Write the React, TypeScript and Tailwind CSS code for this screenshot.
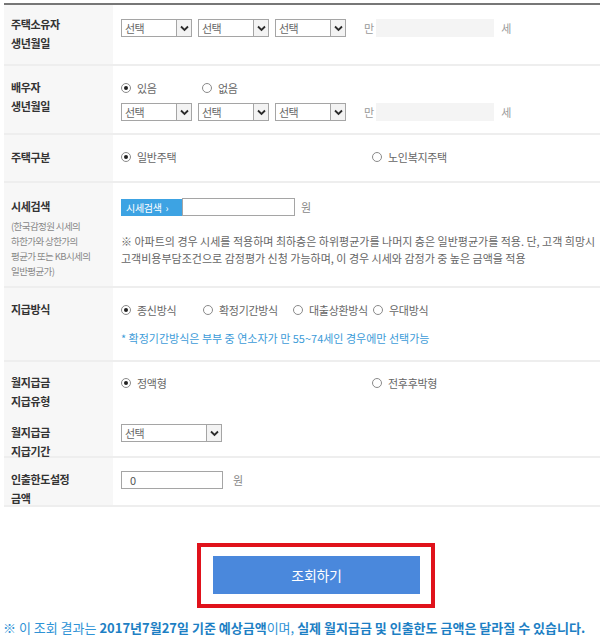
import type { ReactNode } from 'react'

const font = { fontFamily: '"Noto Sans CJK KR", "Noto Sans", sans-serif' }

function Select({ width = 'w-[71px]' }: { width?: string }) {
  return (
    <div className={`${width} h-[18px] flex items-stretch border border-[#a5a5a5] bg-white`}>
      <span className="flex-1 pl-[3px] text-[11px] leading-[16px] text-[#666] tracking-[-0.5px]">선택</span>
      <span className="w-[15px] flex items-center justify-center border-l border-[#a5a5a5] bg-[#f3f3f3]">
        <svg width="9" height="7" viewBox="0 0 9 7">
          <path d="M1 1.5 L4.5 5 L8 1.5" fill="none" stroke="#2b2b2b" strokeWidth="1.8" />
        </svg>
      </span>
    </div>
  )
}

function Radio({ checked = false, label, width }: { checked?: boolean; label: string; width: string }) {
  return (
    <div className={`${width} flex items-center h-[18px]`}>
      <span className="w-[10px] h-[10px] rounded-full border border-[#8a8a8a] flex items-center justify-center bg-white">
        {checked && <span className="w-[4px] h-[4px] rounded-full bg-[#222]" />}
      </span>
      <span className="ml-[6px] text-[11px] text-[#666] tracking-[-0.3px] whitespace-nowrap">{label}</span>
    </div>
  )
}

function AgeBox() {
  return (
    <div className="flex items-center">
      <span className="ml-[12px] text-[11px] text-[#999]">만</span>
      <span className="ml-[2px] w-[118px] h-[18px] bg-[#f4f4f4]" />
      <span className="ml-[7px] text-[11px] text-[#999]">세</span>
    </div>
  )
}

function Row({ height, label, children }: { height: string; label: ReactNode; children: ReactNode }) {
  return (
    <div className={`flex ${height} border-b-2 border-[#eeeeee]`}>
      <div className="w-[109px] shrink-0 bg-[#f7f7f7] px-[7px]">{label}</div>
      <div className="flex-1 pl-[8px]">{children}</div>
    </div>
  )
}

function Label({ lines, pt }: { lines: string[]; pt: string }) {
  return (
    <div className={`${pt} text-[11px] leading-[19px] font-bold text-[#333] tracking-[-0.4px]`}>
      {lines.map((l) => (
        <div key={l}>{l}</div>
      ))}
    </div>
  )
}

export default function App() {
  return (
    <div className="w-[600px] h-[639px] bg-white overflow-hidden" style={font}>
      <div className="pl-[4px] pt-[3px]">
        <div className="border-t-2 border-[#777]">
          <Row height="h-[61px]" label={<Label pt="pt-[10px]" lines={['주택소유자', '생년월일']} />}>
            <div className="pt-[14px] flex items-center gap-[6px]">
              <Select />
              <Select />
              <Select />
              <AgeBox />
            </div>
          </Row>

          <Row height="h-[69px]" label={<Label pt="pt-[12px]" lines={['배우자', '생년월일']} />}>
            <div className="pt-[13px] flex">
              <Radio checked label="있음" width="w-[81px]" />
              <Radio label="없음" width="w-[81px]" />
            </div>
            <div className="mt-[6px] flex items-center gap-[6px]">
              <Select />
              <Select />
              <Select />
              <AgeBox />
            </div>
          </Row>

          <Row height="h-[48px]" label={<Label pt="pt-[13px]" lines={['주택구분']} />}>
            <div className="pt-[13px] flex">
              <Radio checked label="일반주택" width="w-[251px]" />
              <Radio label="노인복지주택" width="w-[120px]" />
            </div>
          </Row>

          <Row
            height="h-[105px]"
            label={
              <div>
                <Label pt="pt-[14px]" lines={['시세검색']} />
                <div className="mt-[3px] text-[9.5px] leading-[15px] text-[#888] tracking-[-0.6px]">
                  <div>(한국감정원 시세의</div>
                  <div>하한가와 상한가의</div>
                  <div>평균가 또는 KB시세의</div>
                  <div>일반평균가)</div>
                </div>
              </div>
            }
          >
            <div className="pt-[15px] flex items-center">
              <span className="w-[61px] h-[17px] bg-[#3da3e3] text-white text-[10px] leading-[17px] pl-[5px] tracking-[-0.3px]">
                시세검색 <span className="ml-[2px]">›</span>
              </span>
              <span className="w-[113px] h-[18px] border border-[#a5a5a5] bg-white" />
              <span className="ml-[6px] text-[11px] text-[#888]">원</span>
            </div>
            <div className="mt-[17px] text-[11px] leading-[17px] text-[#666] tracking-[0px] whitespace-nowrap">
              <div>※ 아파트의 경우 시세를 적용하며 최하층은 하위평균가를 나머지 층은 일반평균가를 적용. 단, 고객 희망시</div>
              <div>고객비용부담조건으로 감정평가 신청 가능하며, 이 경우 시세와 감정가 중 높은 금액을 적용</div>
            </div>
          </Row>

          <Row height="h-[74px]" label={<Label pt="pt-[12px]" lines={['지급방식']} />}>
            <div className="pt-[13px] flex">
              <Radio checked label="종신방식" width="w-[82px]" />
              <Radio label="확정기간방식" width="w-[90px]" />
              <Radio label="대출상환방식" width="w-[80px]" />
              <Radio label="우대방식" width="w-[80px]" />
            </div>
            <div className="mt-[11px] text-[11px] leading-[17px] text-[#3c9bd8] tracking-[0px]">
              * 확정기간방식은 부부 중 연소자가 만 55~74세인 경우에만 선택가능
            </div>
          </Row>

          <div className="flex h-[96px] border-b-2 border-[#eeeeee]">
            <div className="w-[109px] shrink-0 bg-[#f7f7f7] px-[7px]">
              <Label pt="pt-[11px]" lines={['월지급금', '지급유형']} />
              <Label pt="pt-[12px]" lines={['월지급금', '지급기간']} />
            </div>
            <div className="flex-1 pl-[8px]">
              <div className="pt-[12px] flex">
                <Radio checked label="정액형" width="w-[251px]" />
                <Radio label="전후후박형" width="w-[120px]" />
              </div>
              <div className="mt-[32px]">
                <Select width="w-[101px]" />
              </div>
            </div>
          </div>

          <Row height="h-[49px]" label={<Label pt="pt-[12px]" lines={['인출한도설정', '금액']} />}>
            <div className="pt-[13px] flex items-center">
              <span className="w-[102px] h-[18px] border border-[#a5a5a5] bg-white pl-[8px] text-[11px] leading-[16px] text-[#555]">
                0
              </span>
              <span className="ml-[10px] text-[11px] text-[#888]">원</span>
            </div>
          </Row>
        </div>
      </div>

      <div className="mt-[36px] pl-[197px]">
        <div className="w-[238px] h-[65px] border-4 border-[#e0121b] pl-[12px] pt-[9px]">
          <button className="w-[207px] h-[38px] bg-[#4a88dc] text-white text-[14px] tracking-[-0.3px]">
            조회하기
          </button>
        </div>
      </div>

      <div className="mt-[11px] pl-[3px] text-[13px] leading-[17px] text-[#2f93d6] tracking-[0px] whitespace-nowrap">
        ※ 이 조회 결과는 <span className="font-bold text-[#1d7fc4]">2017년7월27일 기준 예상금액</span>이며,{' '}
        <span className="font-bold text-[#1d7fc4]">실제 월지급금 및 인출한도 금액은 달라질 수 있습니다.</span>
      </div>
    </div>
  )
}
